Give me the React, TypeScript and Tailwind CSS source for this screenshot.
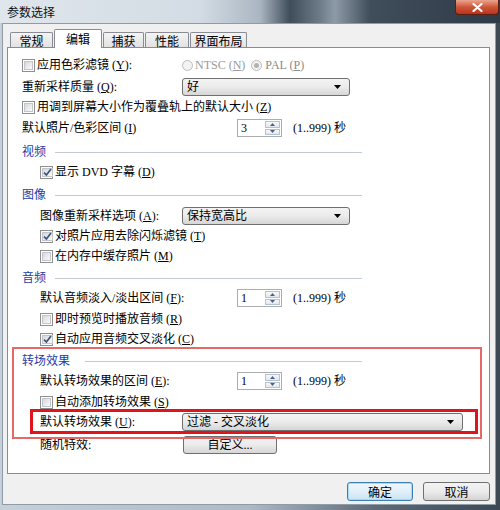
import React from "react";

const K = ({ c }: { c: string }) => <span className="underline">{c}</span>;

const Check = ({ checked = false }: { checked?: boolean }) => (
  <span className="w-[13px] h-[13px] border border-[#8f8f8f] bg-white p-[1px] flex shrink-0">
    <span className="flex-1 border border-[#c2c6cc] bg-linear-to-br from-[#d6d9dd] to-[#fafafa] flex items-center justify-center">
      {checked && (
        <svg width="9" height="9" viewBox="0 0 9 9" className="overflow-visible">
          <path d="M1 4.6 L3.4 7 L8 1" fill="none" stroke="#3e5476" strokeWidth="1.7" />
        </svg>
      )}
    </span>
  </span>
);

const Radio = ({ on = false }: { on?: boolean }) => (
  <span className="w-[11px] h-[11px] rounded-full border border-[#bcbcbc] bg-[#f3f3f3] flex items-center justify-center shrink-0">
    {on && <span className="w-[5px] h-[5px] rounded-full bg-[#b3b3b3]" />}
  </span>
);

const Combo = ({ text, w }: { text: string; w: string }) => (
  <div
    className={`${w} h-[18px] rounded-[3px] border border-[#707070] bg-linear-to-b from-[#f3f3f3] via-[#ebebeb] to-[#d6d6d6] flex items-center pl-[4px] pr-[8px] shrink-0`}
  >
    <span className="flex-1">{text}</span>
    <svg width="7" height="4" viewBox="0 0 7 4">
      <path d="M0 0h7L3.5 4z" fill="#000" />
    </svg>
  </div>
);

const Spin = ({ v }: { v: string }) => (
  <div className="w-[45px] h-[18px] border border-[#abadb3] bg-white flex items-stretch shrink-0 p-[1px]">
    <span className="flex-1 pl-[2px] flex items-center">{v}</span>
    <div className="w-[15px] flex flex-col gap-[1px]">
      <span className="flex-1 flex items-center justify-center border border-[#b6c2cf] bg-linear-to-b from-[#f7f8f9] to-[#e3e8ee]">
        <svg width="5" height="3" viewBox="0 0 5 3">
          <path d="M0 3L2.5 0L5 3z" fill="#4d6185" />
        </svg>
      </span>
      <span className="flex-1 flex items-center justify-center border border-[#b6c2cf] bg-linear-to-b from-[#f7f8f9] to-[#e3e8ee]">
        <svg width="5" height="3" viewBox="0 0 5 3">
          <path d="M0 0L2.5 3L5 0z" fill="#4d6185" />
        </svg>
      </span>
    </div>
  </div>
);

const Range = () => <span className="ml-[11px]">(1..999) 秒</span>;

const Header = ({ text, gap, mt }: { text: string; gap: string; mt: string }) => (
  <div className={`${mt} h-[20px] pl-[14px] w-[354px] flex items-center shrink-0`}>
    <span className="text-[#1f3ca6]">{text}</span>
    <span className={`${gap} flex-1 h-px bg-[#c3cad2]`} />
  </div>
);

const Tab = ({ label, w, active = false }: { label: string; w: string; active?: boolean }) =>
  active ? (
    <div className={`${w} h-[19px] border border-b-0 border-[#898c95] bg-white rounded-t-[2px] flex items-center justify-center`}>
      {label}
    </div>
  ) : (
    <div
      className={`${w} h-[15px] mb-[1px] border border-b-0 border-[#898c95] bg-linear-to-b from-[#f4f4f4] to-[#e2e2e2] rounded-t-[2px] flex items-center justify-center pt-[1px]`}
    >
      {label}
    </div>
  );

export default function App() {
  return (
    <div className="w-[500px] h-[510px] overflow-hidden flex flex-col bg-[linear-gradient(90deg,#c6d0d9_0%,#aeb9c4_50%,#5d6a77_75%,#3c4854_100%)] font-['Liberation_Serif','Noto_Sans_CJK_SC',serif] text-[12px] text-black leading-none">
      {/* title bar */}
      <div className="h-[23px] shrink-0 flex justify-between items-start bg-[linear-gradient(90deg,#dfe6ec_0%,#d3dce4_40%,#aab6c2_52%,#3f4c5a_58%,#6e7c89_64%,#8e9ba7_67%,#404d5b_74%,#2e3a46_100%)]">
        <span className="pl-[7px] self-center font-['Noto_Sans_CJK_SC',sans-serif] text-[#111]">参数选择</span>
        <div className="w-[44px] h-[15px] mr-[1px] rounded-b-[4px] border border-t-0 border-[#5a1e12] bg-linear-to-b from-[#e9a590] via-[#cf5538] to-[#b8341a] flex items-center justify-center">
          <svg width="11" height="9" viewBox="0 0 11 9">
            <path d="M1.5 1 L9.5 8 M9.5 1 L1.5 8" stroke="#fff" strokeWidth="2.2" strokeLinecap="round" />
          </svg>
        </div>
      </div>

      {/* client area */}
      <div className="ml-[2px] mr-[4px] h-[482px] shrink-0 bg-[#f0f0f0] border border-[#8f9ba7] flex flex-col">
        <div className="h-[24px] -mb-[1px] pl-[7px] flex items-end gap-[1px] relative z-10 font-['Noto_Sans_CJK_SC',sans-serif]">
          <Tab label="常规" w="w-[43px]" />
          <Tab label="编辑" w="w-[48px]" active />
          <Tab label="捕获" w="w-[41px]" />
          <Tab label="性能" w="w-[44px]" />
          <Tab label="界面布局" w="w-[57px]" />
        </div>

        <div className="relative ml-[4px] mr-[5px] h-[427px] border border-[#898c95] bg-white pt-[7px] flex flex-col">
          <div className="h-[20px] pl-[14px] flex items-center whitespace-nowrap">
            <div className="w-[160px] flex items-center gap-[2px]">
              <Check />
              <span>
                应用色彩滤镜 (<K c="Y" />):
              </span>
            </div>
            <div className="flex items-center gap-[2px] text-[#9a9a9a]">
              <Radio />
              <span>
                NTSC (<K c="N" />)
              </span>
            </div>
            <div className="ml-[6px] flex items-center gap-[3px] text-[#8a8a8a]">
              <Radio on />
              <span>
                PAL (<K c="P" />)
              </span>
            </div>
          </div>

          <div className="mt-[2px] h-[20px] pl-[14px] flex items-center">
            <span className="w-[160px]">
              重新采样质量 (<K c="Q" />):
            </span>
            <Combo text="好" w="w-[168px]" />
          </div>

          <div className="h-[20px] pl-[14px] flex items-center gap-[2px]">
            <Check />
            <span>
              用调到屏幕大小作为覆叠轨上的默认大小 (<K c="Z" />)
            </span>
          </div>

          <div className="mt-[1px] h-[20px] pl-[14px] flex items-center">
            <span className="w-[215px]">
              默认照片/色彩区间 (<K c="I" />)
            </span>
            <Spin v="3" />
            <Range />
          </div>

          <Header text="视频" gap="ml-[9px]" mt="mt-[4px]" />
          <div className="h-[20px] pl-[32px] flex items-center gap-[2px]">
            <Check checked />
            <span>
              显示 DVD 字幕 (<K c="D" />)
            </span>
          </div>

          <Header text="图像" gap="ml-[9px]" mt="mt-[3px]" />
          <div className="mt-[1px] h-[20px] pl-[32px] flex items-center">
            <span className="w-[142px]">
              图像重新采样选项 (<K c="A" />):
            </span>
            <Combo text="保持宽高比" w="w-[168px]" />
          </div>
          <div className="h-[20px] pl-[32px] flex items-center gap-[2px]">
            <Check checked />
            <span>
              对照片应用去除闪烁滤镜 (<K c="T" />)
            </span>
          </div>
          <div className="h-[20px] pl-[32px] flex items-center gap-[2px]">
            <Check />
            <span>
              在内存中缓存照片 (<K c="M" />)
            </span>
          </div>

          <Header text="音频" gap="ml-[9px]" mt="mt-[2px]" />
          <div className="h-[20px] pl-[32px] flex items-center">
            <span className="w-[197px]">
              默认音频淡入/淡出区间 (<K c="F" />):
            </span>
            <Spin v="1" />
            <Range />
          </div>
          <div className="mt-[1px] h-[20px] pl-[32px] flex items-center gap-[2px]">
            <Check />
            <span>
              即时预览时播放音频 (<K c="R" />)
            </span>
          </div>
          <div className="h-[20px] pl-[32px] flex items-center gap-[2px]">
            <Check checked />
            <span>
              自动应用音频交叉淡化 (<K c="C" />)
            </span>
          </div>

          <Header text="转场效果" gap="ml-[15px]" mt="mt-[2px]" />
          <div className="h-[20px] pl-[32px] flex items-center">
            <span className="w-[197px]">
              默认转场效果的区间 (<K c="E" />):
            </span>
            <Spin v="1" />
            <Range />
          </div>
          <div className="mt-[1px] h-[20px] pl-[32px] flex items-center gap-[2px]">
            <Check />
            <span>
              自动添加转场效果 (<K c="S" />)
            </span>
          </div>
          <div className="h-[20px] pl-[32px] flex items-center">
            <span className="w-[142px]">
              默认转场效果 (<K c="U" />):
            </span>
            <Combo text="过滤 - 交叉淡化" w="w-[281px]" />
          </div>

          <div className="mt-[3px] h-[20px] pl-[32px] flex items-center">
            <span className="w-[143px]">随机特效:</span>
            <button className="w-[94px] h-[18px] rounded-[3px] border border-[#707070] bg-linear-to-b from-[#f3f3f3] via-[#ebebeb] to-[#d6d6d6] flex items-center justify-center">
              自定义...
            </button>
          </div>

          {/* annotation boxes */}
          <div className="absolute left-[4px] top-[299px] w-[470px] h-[92px] border-2 border-[#e46a6a]" />
          <div className="absolute left-[22px] top-[361px] w-[448px] h-[25px] border-[3px] border-[#e0141a]" />
        </div>

        <div className="mt-[8px] h-[19px] pr-[5px] flex justify-end gap-[10px] font-['Noto_Sans_CJK_SC',sans-serif]">
          <button className="w-[66px] h-[19px] rounded-[3px] border border-[#3c7fb1] bg-linear-to-b from-[#eef7fc] via-[#e2f0f9] to-[#c9e3f3] shadow-[inset_0_0_0_1px_#a8daf5] flex items-center justify-center">
            确定
          </button>
          <button className="w-[67px] h-[19px] rounded-[3px] border border-[#707070] bg-linear-to-b from-[#f3f3f3] via-[#ebebeb] to-[#d4d4d4] flex items-center justify-center">
            取消
          </button>
        </div>
      </div>
    </div>
  );
}
